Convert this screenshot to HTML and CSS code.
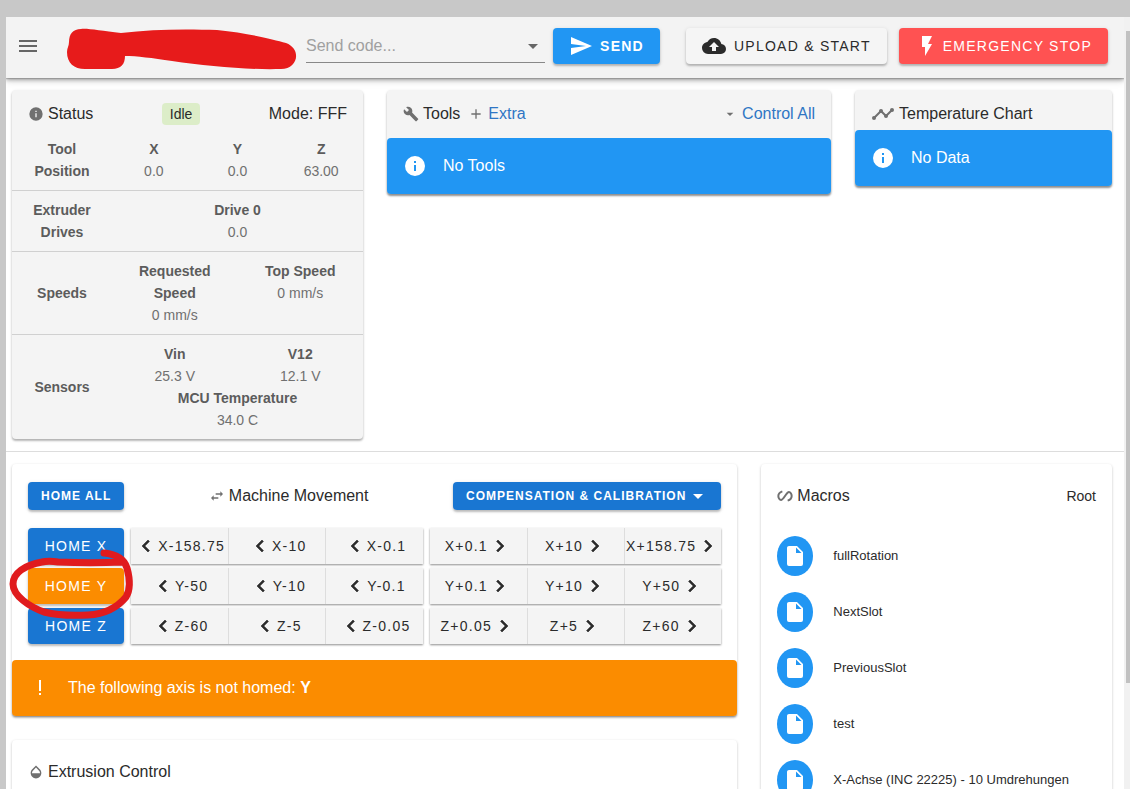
FILE: index.html
```html
<!DOCTYPE html>
<html lang="en">
<head>
<meta charset="utf-8">
<meta name="viewport" content="width=device-width, initial-scale=1">
<title>Machine Dashboard</title>
<link rel="stylesheet" href="styles.css">
</head>
<body>
<svg class="sprite" aria-hidden="true">
  <symbol id="info" viewBox="0 0 24 24"><path d="M13,9H11V7H13M13,17H11V11H13M12,2A10,10 0 0,0 2,12A10,10 0 0,0 12,22A10,10 0 0,0 22,12A10,10 0 0,0 12,2Z"/></symbol>
  <symbol id="left" viewBox="0 0 24 24"><path d="M15.410,16.580L10.830,12L15.410,7.410L14,6L8,12L14,18Z" stroke="currentColor" stroke-width=".6"/></symbol>
  <symbol id="right" viewBox="0 0 24 24"><path d="M8.590,16.580L13.170,12L8.590,7.410L10,6L16,12L10,18Z" stroke="currentColor" stroke-width=".6"/></symbol>
  <symbol id="down" viewBox="0 0 24 24"><path d="M7,10L12,15L17,10H7Z"/></symbol>
  <symbol id="file" viewBox="0 0 24 24"><path d="M13,9V3.500L18.500,9M6,2C4.890,2 4,2.890 4,4V20A2,2 0 0,0 6,22H18A2,2 0 0,0 20,20V8L14,2H6Z"/></symbol>
</svg>
<div class="window">
  <div class="app">
    <header class="bar">
      <button class="menu" aria-label="Menu"><svg class="icon24" viewBox="0 0 24 24"><path d="M3,6H21V8H3V6M3,11H21V13H3V11M3,16H21V18H3V16Z"/></svg></button>
      <svg class="scribble" viewBox="0 0 230 44" aria-hidden="true"><path d="M14 1 C20 0 34 3 54 5 C85 1 120 1 150 2 C180 5 205 11 219 15 C235 21 231 41 214 41 C180 42 140 38 105 33 C85 30 70 28 58 28 C58 36 54 41 45 41 H18 C7 41 0 35 0 24 C0 20 2 18 2 14 C2 6 6 1 14 1Z"/></svg>
      <div class="code">
        <input type="text" aria-label="Send code" placeholder="Send code...">
        <svg class="icon24" viewBox="0 0 24 24"><use href="#down"/></svg>
      </div>
      <button class="btn blue send"><svg class="icon24" viewBox="0 0 24 24"><path d="M2,21L23,12L2,3V10L17,12L2,14V21Z"/></svg>SEND</button>
      <button class="btn light upload"><svg class="icon24" viewBox="0 0 24 24"><path d="M14,13V17H10V13H7L12,8L17,13M19.350,10.030C18.670,6.590 15.640,4 12,4C9.110,4 6.600,5.640 5.350,8.030C2.340,8.360 0,10.900 0,14A6,6 0 0,0 6,20H19A5,5 0 0,0 24,15C24,12.360 21.950,10.220 19.350,10.030Z"/></svg>UPLOAD &amp; START</button>
      <button class="btn red stop"><svg class="icon24" viewBox="0 0 24 24"><path d="M7,2V13H10V22L17,10H13L17,2H7Z"/></svg>EMERGENCY STOP</button>
    </header>

    <section class="overview">
      <article class="card grey">
        <div class="title status-title">
          <span class="lead"><svg class="icon16" viewBox="0 0 24 24"><use href="#info"/></svg>Status</span>
          <span class="chip">Idle</span>
          <span>Mode: FFF</span>
        </div>
        <table class="status">
          <colgroup><col class="label"><col><col><col><col><col><col></colgroup>
          <tbody class="first"><tr><th>Tool Position</th>
            <td colspan="2"><b>X</b>0.0</td><td colspan="2"><b>Y</b>0.0</td><td colspan="2"><b>Z</b>63.00</td></tr></tbody>
          <tbody><tr><th>Extruder Drives</th><td colspan="6"><b>Drive 0</b>0.0</td></tr></tbody>
          <tbody><tr><th>Speeds</th><td colspan="3"><b>Requested<br>Speed</b>0 mm/s</td><td colspan="3"><b>Top Speed</b>0 mm/s</td></tr></tbody>
          <tbody class="pair"><tr><th rowspan="2">Sensors</th><td colspan="3"><b>Vin</b>25.3 V</td><td colspan="3"><b>V12</b>12.1 V</td></tr>
          <tr><td colspan="6"><b>MCU Temperature</b>34.0 C</td></tr></tbody>
        </table>
      </article>

      <article class="card grey">
        <div class="title">
          <span class="lead"><svg class="icon16" viewBox="0 0 24 24"><path d="M22.700,19L13.600,9.900C14.500,7.600 14,4.900 12.100,3C10.100,1 7.100,0.600 4.700,1.700L9,6L6,9L1.600,4.700C0.400,7.100 0.900,10.100 2.900,12.100C4.800,14 7.500,14.500 9.800,13.600L18.900,22.700C19.300,23.100 19.900,23.100 20.300,22.700L22.600,20.400C23.100,20 23.100,19.300 22.700,19Z"/></svg>Tools
            <a class="lead extra" href="#"><svg class="icon16" viewBox="0 0 24 24"><path d="M19,13H13V19H11V13H5V11H11V5H13V11H19V13Z"/></svg>Extra</a></span>
          <a class="lead" href="#"><svg class="icon16" viewBox="0 0 24 24"><use href="#down"/></svg>Control All</a>
        </div>
        <div class="alert blue"><svg class="icon24" viewBox="0 0 24 24"><use href="#info"/></svg>No Tools</div>
      </article>

      <article class="card grey">
        <div class="title short"><span class="lead"><svg class="icon24 muted" viewBox="0 0 24 24"><path d="M3 16L10 9L15 14L21 8" fill="none" stroke="currentColor" stroke-width="2"/><circle cx="3" cy="16" r="2"/><circle cx="10" cy="9" r="2"/><circle cx="15" cy="14" r="2"/><circle cx="21" cy="8" r="2"/></svg>Temperature Chart</span></div>
        <div class="alert blue"><svg class="icon24" viewBox="0 0 24 24"><use href="#info"/></svg>No Data</div>
      </article>
    </section>

    <section class="lower">
      <div class="column">
        <article class="card">
          <div class="title movement-title">
            <button class="btn small navy">HOME ALL</button>
            <span class="lead"><svg class="icon16" viewBox="0 0 24 24"><path d="M21,9L17,5V8H10V10H17V13M7,11L3,15L7,19V16H14V14H7V11Z"/></svg>Machine Movement</span>
            <button class="btn small navy">COMPENSATION &amp; CALIBRATION<svg class="icon24" viewBox="0 0 24 24"><use href="#down"/></svg></button>
          </div>
          <div class="axes">
            <div class="axis">
              <button class="btn navy">HOME X</button>
              <div class="moves"><button><svg class="icon24"><use href="#left"/></svg>X-158.75</button><button><svg class="icon24"><use href="#left"/></svg>X-10</button><button><svg class="icon24"><use href="#left"/></svg>X-0.1</button></div>
              <div class="moves"><button>X+0.1<svg class="icon24"><use href="#right"/></svg></button><button>X+10<svg class="icon24"><use href="#right"/></svg></button><button>X+158.75<svg class="icon24"><use href="#right"/></svg></button></div>
            </div>
            <div class="axis">
              <button class="btn orange">HOME Y</button>
              <div class="moves"><button><svg class="icon24"><use href="#left"/></svg>Y-50</button><button><svg class="icon24"><use href="#left"/></svg>Y-10</button><button><svg class="icon24"><use href="#left"/></svg>Y-0.1</button></div>
              <div class="moves"><button>Y+0.1<svg class="icon24"><use href="#right"/></svg></button><button>Y+10<svg class="icon24"><use href="#right"/></svg></button><button>Y+50<svg class="icon24"><use href="#right"/></svg></button></div>
              <svg class="circle" viewBox="0 0 128 72" aria-hidden="true"><path d="M96 5C106 6 116 10 119 20C122 31 123 41 118 49C109 60 97 66 80 67C62 68 48 67 36 64C22 59 5 48 5 36C5 25 17 17 34 14C38 13 44 13 50 14C70 15 95 15 114 14"/></svg>
            </div>
            <div class="axis">
              <button class="btn navy">HOME Z</button>
              <div class="moves"><button><svg class="icon24"><use href="#left"/></svg>Z-60</button><button><svg class="icon24"><use href="#left"/></svg>Z-5</button><button><svg class="icon24"><use href="#left"/></svg>Z-0.05</button></div>
              <div class="moves"><button>Z+0.05<svg class="icon24"><use href="#right"/></svg></button><button>Z+5<svg class="icon24"><use href="#right"/></svg></button><button>Z+60<svg class="icon24"><use href="#right"/></svg></button></div>
            </div>
          </div>
          <div class="alert orange"><svg class="icon24" viewBox="0 0 24 24"><path d="M11 4H13V15H11ZM11 17H13V19H11Z"/></svg><span>The following axis is not homed: <b>Y</b></span></div>
        </article>
        <article class="card extrusion">
          <div class="title"><span class="lead"><svg class="icon16" viewBox="0 0 24 24"><path d="M17.660,8L12,2.350L6.340,8C4.780,9.560 4,11.640 4,13.640C4,15.640 4.780,17.750 6.340,19.310C7.900,20.870 9.950,21.660 12,21.660C14.050,21.660 16.100,20.870 17.660,19.310C19.220,17.750 20,15.640 20,13.640C20,11.640 19.220,9.560 17.660,8M6,14C6,12 6.620,10.730 7.760,9.600L12,5.270L16.240,9.650C17.380,10.770 18,12 18,14H6Z"/></svg>Extrusion Control</span></div>
        </article>
      </div>

      <article class="card macros">
        <div class="title"><span class="lead"><svg class="icon16" viewBox="0 0 24 24"><path d="M8 5C5 6 2 9 2 12C2 15 4 18 6 18C10 18 14 6 18 6C20 6 22 9 22 12C22 15 19 18 16 19" fill="none" stroke="currentColor" stroke-width="3"/></svg>Macros</span><span class="root">Root</span></div>
        <ul>
          <li><span class="avatar"><svg class="icon24"><use href="#file"/></svg></span>fullRotation</li>
          <li><span class="avatar"><svg class="icon24"><use href="#file"/></svg></span>NextSlot</li>
          <li><span class="avatar"><svg class="icon24"><use href="#file"/></svg></span>PreviousSlot</li>
          <li><span class="avatar"><svg class="icon24"><use href="#file"/></svg></span>test</li>
          <li><span class="avatar"><svg class="icon24"><use href="#file"/></svg></span>X-Achse (INC 22225) - 10 Umdrehungen</li>
        </ul>
      </article>
    </section>
  </div>
  <div class="scrollbar" aria-hidden="true"><div class="thumb"></div></div>
</div>
</body>
</html>
```
FILE: styles.css
```css
* { box-sizing: border-box; }
body {
  margin: 0;
  height: 100vh;
  overflow: hidden;
  background: #c8c8c8;
  color: #2b2b2b;
  font: 16px/24px "Liberation Sans", Arial, sans-serif;
}
button, input { font: inherit; color: inherit; border: 0; }
button { cursor: pointer; }
a { color: #2f76c4; text-decoration: none; }
svg { display: block; flex: none; fill: currentColor; }
.sprite { position: absolute; width: 0; height: 0; }
.icon16 { width: 16px; height: 16px; color: #707070; }
.icon24 { width: 24px; height: 24px; }
.muted { color: #707070; }

.window { display: flex; height: 100vh; padding: 17px 0 0 6px; }
.app { flex: 1; min-width: 0; background: #fff; overflow: hidden; }
.scrollbar { width: 6px; padding: 14px 0 0 2px; background: #f1f1f1; }
.thumb { height: 86%; background: #c1c1c1; }

.bar {
  display: flex;
  align-items: center;
  height: 61px;
  padding: 0 16px 3px 10px;
  background: #f3f3f3;
  box-shadow: 0 2px 4px rgba(0,0,0,.3), 0 3px 8px rgba(0,0,0,.12), 0 1px 1px rgba(0,0,0,.15);
}
.menu { padding: 0; background: none; color: #666; }
.scribble { width: 230px; height: 44px; margin: 8px 9px 0 27px; color: #e71b1b; }
.code {
  display: flex;
  flex: 1;
  align-items: center;
  height: 34px;
  border-bottom: 1px solid #888;
}
.code input { flex: 1; min-width: 0; padding: 0; background: none; outline: 0; }
.code input::placeholder { color: #a0a0a0; opacity: 1; }
.code .icon24 { color: #666; }

.btn {
  display: flex;
  align-items: center;
  justify-content: center;
  height: 36px;
  padding: 0 16px;
  border-radius: 4px;
  font-size: 14px;
  letter-spacing: 1.25px;
  white-space: nowrap;
  color: #fff;
  box-shadow: 0 2px 2px rgba(0,0,0,.2), 0 1px 4px rgba(0,0,0,.12);
}
.small { height: 28px; padding: 0 13px; font-size: 12px; letter-spacing: 1px; font-weight: bold; }
.small .icon24 { margin-right: -2px; }
.blue { background: #2196f3; }
.navy { background: #1976d2; }
.red { background: #ff5252; }
.orange { background: #fb8c00; }
.light { background: #f5f5f5; color: #2b2b2b; }
.send { gap: 7px; margin-left: 8px; font-weight: bold; }
.upload { gap: 8px; margin-left: 26px; }
.stop { gap: 4px; margin-left: 12px; }

.overview {
  display: grid;
  grid-template-columns: 351fr 444fr 257fr;
  align-items: start;
  gap: 24px;
  padding: 12px 12px 12px 6px;
  border-bottom: 1px solid #ddd;
}
.lower {
  display: grid;
  grid-template-columns: 726fr 351fr;
  gap: 24px;
  padding: 12px 12px 0 6px;
}
.column { display: grid; align-content: start; gap: 24px; min-width: 0; }
.card {
  min-width: 0;
  border-radius: 4px;
  box-shadow: 0 1px 3px rgba(0,0,0,.2), 0 1px 1px rgba(0,0,0,.14);
}
.grey { background: #f4f4f4; box-shadow: 0 2px 2px rgba(0,0,0,.22), 0 1px 3px rgba(0,0,0,.14); }
.title {
  display: flex;
  align-items: center;
  justify-content: space-between;
  height: 48px;
  padding: 0 16px;
}
.short { height: 40px; padding-top: 8px; }
.lead { display: flex; align-items: center; gap: 4px; }
.extra { margin-left: 4px; }
.chip {
  padding: 0 8px;
  border-radius: 4px;
  background: #dcedc8;
  font-size: 14px;
  line-height: 22px;
}
.alert {
  display: flex;
  align-items: center;
  gap: 16px;
  height: 56px;
  padding: 0 16px;
  border-radius: 4px;
  color: #fff;
  box-shadow: 0 2px 2px rgba(0,0,0,.2);
}

.status {
  width: 100%;
  table-layout: fixed;
  border-collapse: collapse;
  font-size: 14px;
  line-height: 22px;
  text-align: center;
  color: #707070;
}
.status .label { width: 100px; }
.status th { padding: 8px 16px; }
.status td { padding: 8px 4px; vertical-align: top; }
.status b { display: block; }
.status th, .status b { color: #5c5c5c; }
.status tbody + tbody { border-top: 1px solid #d0d0d0; }
.status .first th, .status .first td { padding-top: 0; }
.status .pair tr:first-child td { padding-bottom: 0; }
.status .pair tr:last-child td { padding-top: 0; }

.movement-title { height: 64px; }
.axes { display: grid; gap: 4px; padding: 0 16px 16px; }
.axis {
  position: relative;
  display: grid;
  grid-template-columns: 96px 1fr 1fr;
  gap: 7px;
}
.moves { display: grid; grid-template-columns: repeat(3, minmax(0, 1fr)); box-shadow: 0 1px 2px rgba(0,0,0,.45); }
.moves button {
  display: flex;
  align-items: center;
  justify-content: center;
  height: 36px;
  padding: 0;
  background: #f4f4f4;
  font-size: 14px;
  letter-spacing: 1.25px;
  white-space: nowrap;
}
.moves button + button { border-left: 1px solid #ddd; }
.circle {
  position: absolute;
  z-index: 1;
  left: -20px;
  top: -20px;
  width: 128px;
  height: 72px;
  fill: none;
  stroke: #e01b1e;
  stroke-width: 7;
  stroke-linecap: round;
}
.extrusion { height: 200px; }
.extrusion .title, .macros .title { height: 64px; }
.root { font-size: 14px; }
.macros ul { margin: 0; padding: 0 16px; list-style: none; font-size: 13px; }
.macros li { display: flex; align-items: center; gap: 20px; height: 56px; }
.avatar {
  display: flex;
  align-items: center;
  justify-content: center;
  width: 36px;
  height: 40px;
  border-radius: 50%;
  background: #2196f3;
  color: #fff;
}
```
